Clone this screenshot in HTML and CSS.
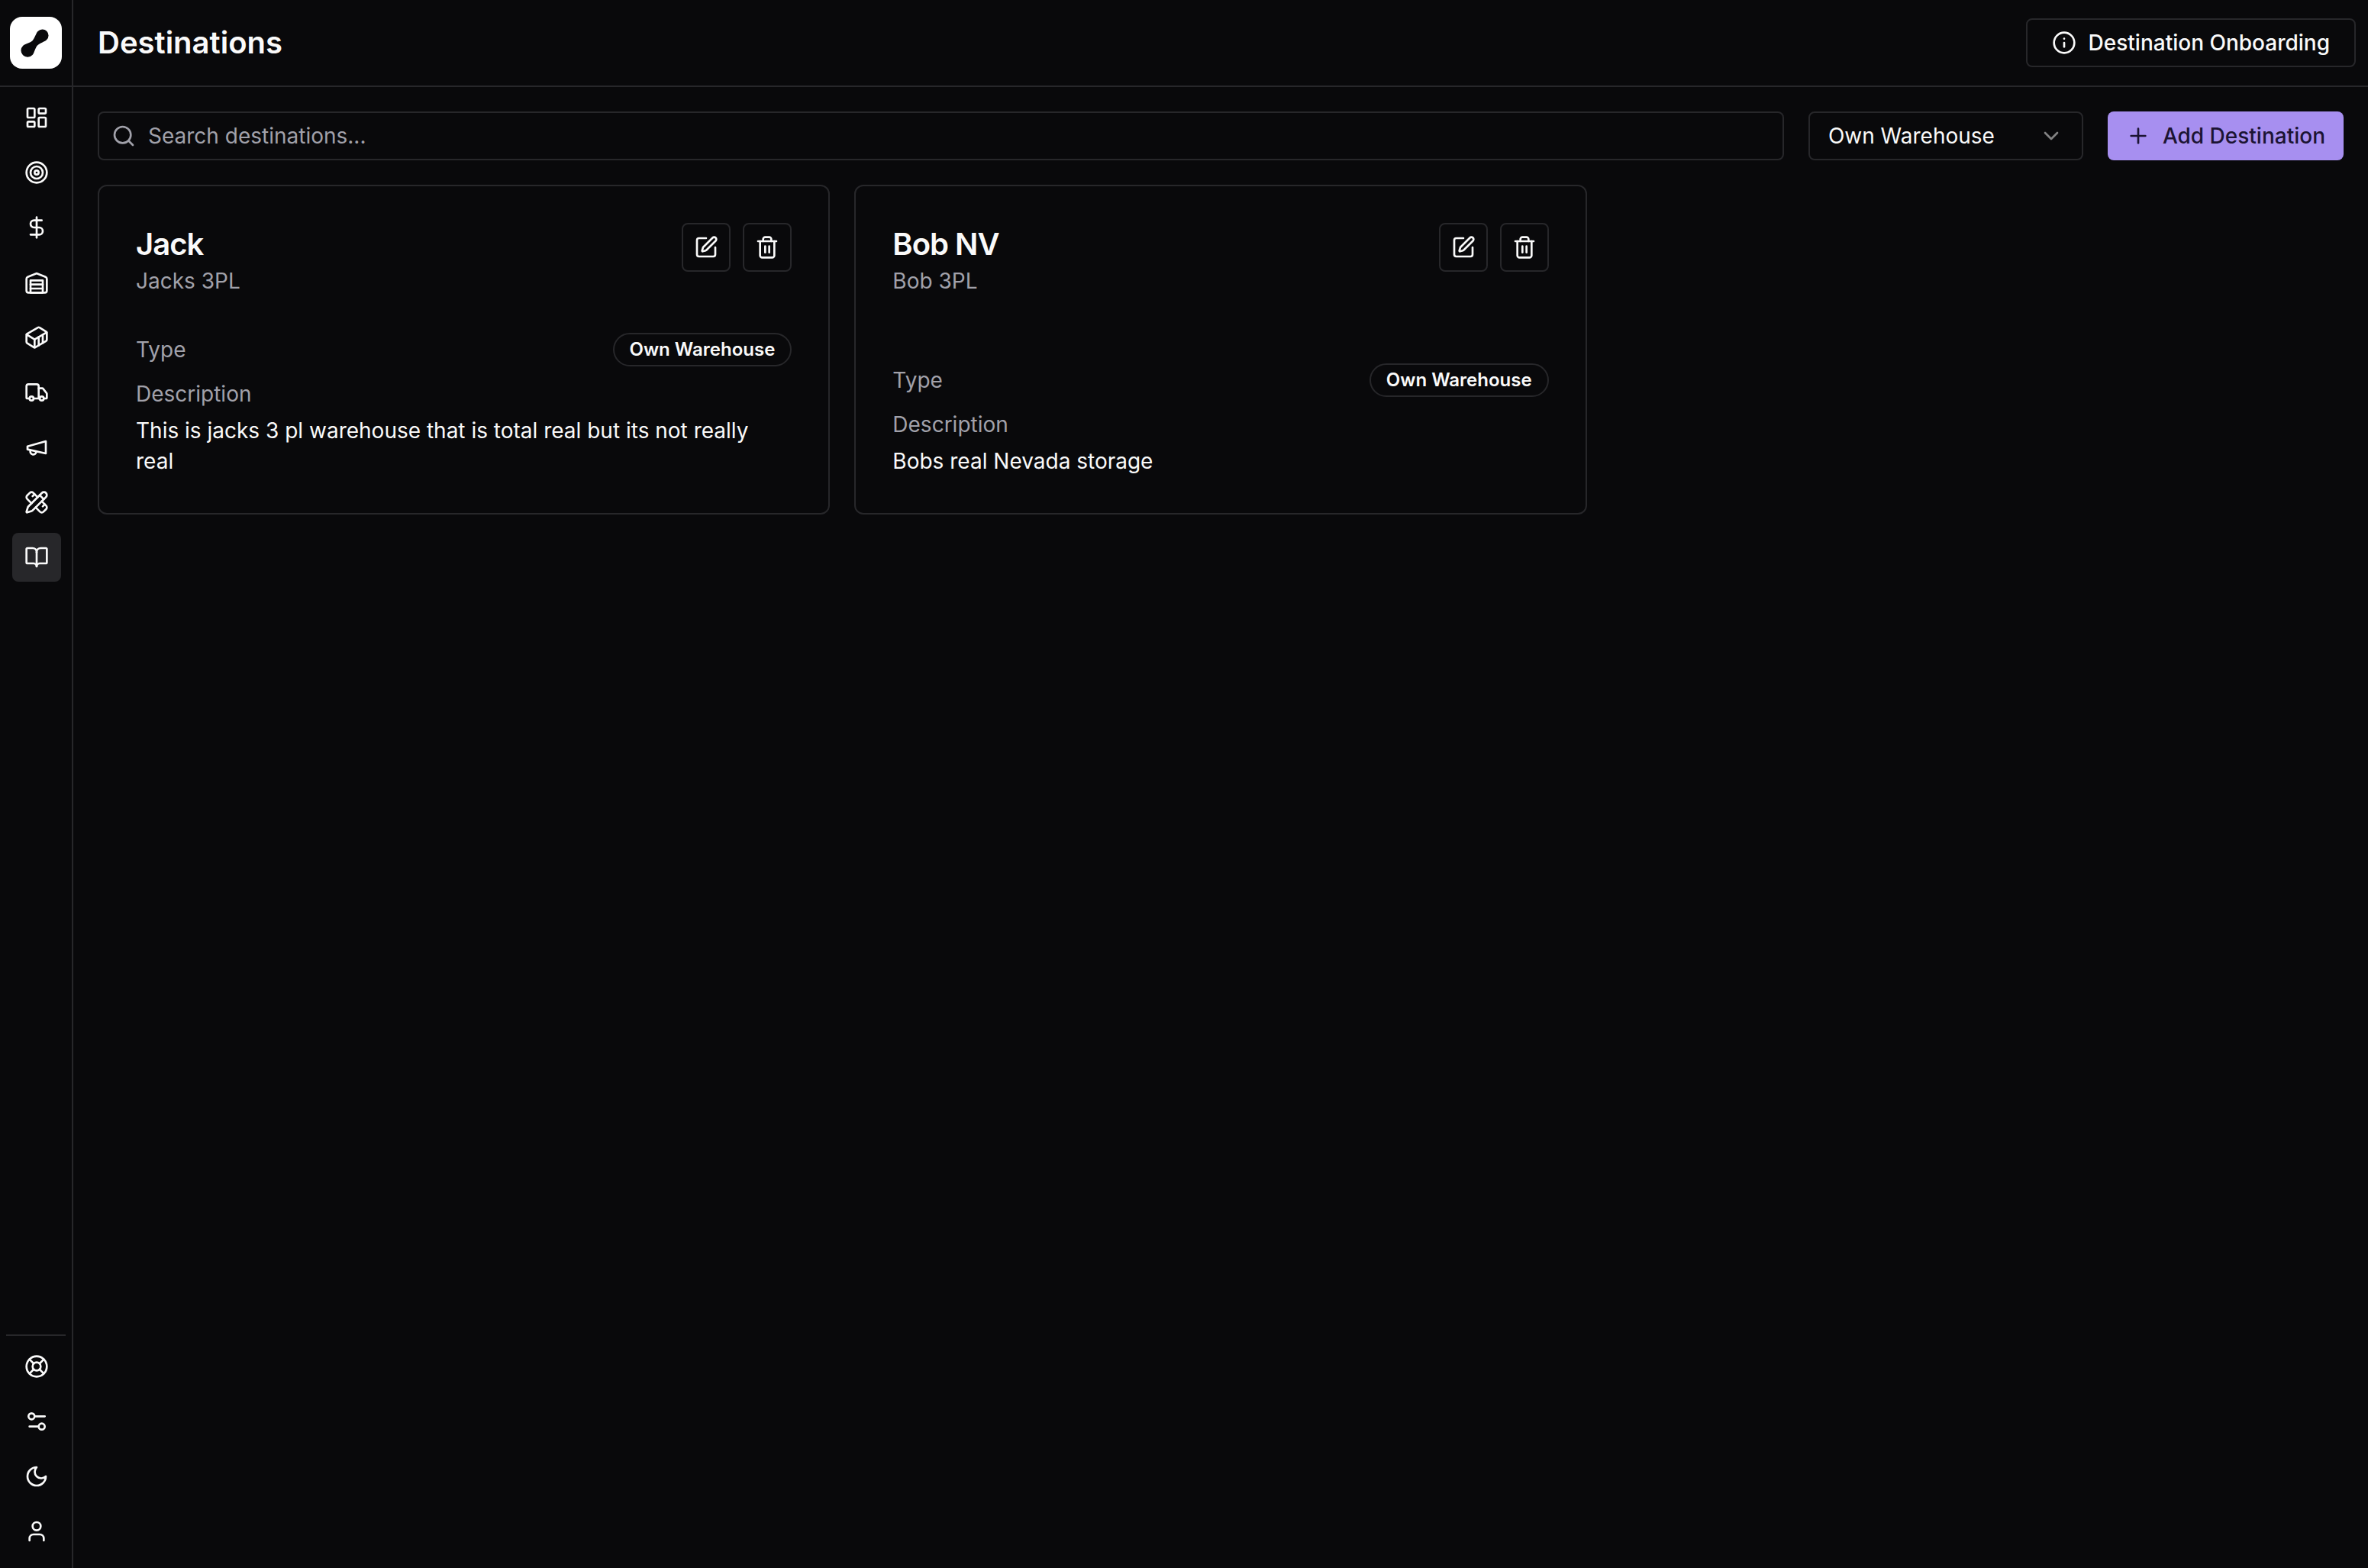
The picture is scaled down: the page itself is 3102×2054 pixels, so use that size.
FILE: index.html
```html
<!DOCTYPE html>
<html lang="en">
<head>
<meta charset="utf-8">
<title>Destinations</title>
<link rel="stylesheet" href="styles.css">
</head>
<body>
<svg class="sprite" width="0" height="0" aria-hidden="true">
  <defs>
    <symbol id="i-dashboard" viewBox="0 0 24 24"><rect x="3" y="3" width="7" height="9" rx="1"/><rect x="14" y="3" width="7" height="5" rx="1"/><rect x="14" y="12" width="7" height="9" rx="1"/><rect x="3" y="16" width="7" height="5" rx="1"/></symbol>
    <symbol id="i-target" viewBox="0 0 24 24"><circle cx="12" cy="12" r="10"/><circle cx="12" cy="12" r="6"/><circle cx="12" cy="12" r="2"/></symbol>
    <symbol id="i-dollar" viewBox="0 0 24 24"><line x1="12" x2="12" y1="2" y2="22"/><path d="M17 5H9.5a3.5 3.5 0 0 0 0 7h5a3.5 3.5 0 0 1 0 7H6"/></symbol>
    <symbol id="i-warehouse" viewBox="0 0 24 24"><path d="M22 8.35V20a2 2 0 0 1-2 2H4a2 2 0 0 1-2-2V8.35A2 2 0 0 1 3.26 6.5l8-3.2a2 2 0 0 1 1.48 0l8 3.2A2 2 0 0 1 22 8.35Z"/><path d="M6 18h12"/><path d="M6 14h12"/><rect x="6" y="10" width="12" height="12"/></symbol>
    <symbol id="i-container" viewBox="0 0 24 24"><path d="M22 7.7c0-.6-.4-1.2-.8-1.5l-6.3-3.9a1.72 1.72 0 0 0-1.7 0l-10.3 6c-.5.2-.9.8-.9 1.4v6.6c0 .5.4 1.2.8 1.5l6.3 3.9a1.72 1.72 0 0 0 1.7 0l10.3-6c.5-.3.9-1 .9-1.5Z"/><path d="M10 21.9V14L2.1 9.1"/><path d="m10 14 11.9-6.9"/><path d="M14 19.8v-8.1"/><path d="M18 17.5V9.4"/></symbol>
    <symbol id="i-truck" viewBox="0 0 24 24"><path d="M14 18V6a2 2 0 0 0-2-2H4a2 2 0 0 0-2 2v11a1 1 0 0 0 1 1h2"/><path d="M15 18H9"/><path d="M19 18h2a1 1 0 0 0 1-1v-3.65a1 1 0 0 0-.22-.624l-3.48-4.35A1 1 0 0 0 17.52 8H14"/><circle cx="17" cy="18" r="2"/><circle cx="7" cy="18" r="2"/></symbol>
    <symbol id="i-megaphone" viewBox="0 0 24 24"><path d="m3 11 18-5v12L3 14v-3z"/><path d="M11.6 16.8a3 3 0 1 1-5.8-1.6"/></symbol>
    <symbol id="i-ruler" viewBox="0 0 24 24"><path d="M13 7 8.7 2.7a2.41 2.41 0 0 0-3.4 0L2.7 5.3a2.41 2.41 0 0 0 0 3.4L7 13"/><path d="m8 6 2-2"/><path d="m18 16 2-2"/><path d="m17 11 4.3 4.3c.94.94.94 2.46 0 3.4l-2.6 2.6c-.94.94-2.46.94-3.4 0L11 17"/><path d="M21.174 6.812a1 1 0 0 0-3.986-3.987L3.842 16.174a2 2 0 0 0-.5.83l-1.321 4.352a.5.5 0 0 0 .623.622l4.353-1.32a2 2 0 0 0 .83-.497z"/><path d="m15 5 4 4"/></symbol>
    <symbol id="i-book" viewBox="0 0 24 24"><path d="M12 7v14"/><path d="M3 18a1 1 0 0 1-1-1V4a1 1 0 0 1 1-1h5a4 4 0 0 1 4 4 4 4 0 0 1 4-4h5a1 1 0 0 1 1 1v13a1 1 0 0 1-1 1h-6a3 3 0 0 0-3 3 3 3 0 0 0-3-3z"/></symbol>
    <symbol id="i-lifebuoy" viewBox="0 0 24 24"><circle cx="12" cy="12" r="10"/><path d="m4.93 4.93 4.24 4.24"/><path d="m14.83 9.17 4.24-4.24"/><path d="m14.83 14.83 4.24 4.24"/><path d="m9.17 14.83-4.24 4.24"/><circle cx="12" cy="12" r="4"/></symbol>
    <symbol id="i-settings" viewBox="0 0 24 24"><path d="M20 7h-9"/><path d="M14 17H5"/><circle cx="17" cy="17" r="3"/><circle cx="7" cy="7" r="3"/></symbol>
    <symbol id="i-moon" viewBox="0 0 24 24"><path d="M12 3a6 6 0 0 0 9 9 9 9 0 1 1-9-9Z"/></symbol>
    <symbol id="i-user" viewBox="0 0 24 24"><path d="M19 21v-2a4 4 0 0 0-4-4H9a4 4 0 0 0-4 4v2"/><circle cx="12" cy="7" r="4"/></symbol>
    <symbol id="i-pen" viewBox="0 0 24 24"><path d="M12 3H5a2 2 0 0 0-2 2v14a2 2 0 0 0 2 2h14a2 2 0 0 0 2-2v-7"/><path d="M18.375 2.625a1 1 0 0 1 3 3l-9.013 9.014a2 2 0 0 1-.853.505l-2.873.84a.5.5 0 0 1-.62-.62l.84-2.873a2 2 0 0 1 .506-.852z"/></symbol>
    <symbol id="i-trash" viewBox="0 0 24 24"><path d="M3 6h18"/><path d="M19 6v14c0 1-1 2-2 2H7c-1 0-2-1-2-2V6"/><path d="M8 6V4c0-1 1-2 2-2h4c1 0 2 1 2 2v2"/><line x1="10" x2="10" y1="11" y2="17"/><line x1="14" x2="14" y1="11" y2="17"/></symbol>
    <symbol id="i-info" viewBox="0 0 24 24"><circle cx="12" cy="12" r="10"/><path d="M12 16v-4"/><path d="M12 8h.01"/></symbol>
    <symbol id="i-search" viewBox="0 0 24 24"><circle cx="11" cy="11" r="8"/><path d="m21 21-4.3-4.3"/></symbol>
    <symbol id="i-chevron" viewBox="0 0 24 24"><path d="m6 9 6 6 6-6"/></symbol>
    <symbol id="i-plus" viewBox="0 0 24 24"><path d="M5 12h14"/><path d="M12 5v14"/></symbol>
  </defs>
</svg>

<div class="app">
  <aside class="sidebar">
    <div class="brand">
      <div class="logo">
        <svg class="logo-mark" viewBox="0 0 68 68"><path d="M36.600 19.100A8 8 0 1 1 48 30.300C45.500 32.800 39 34.500 36 37.500C33 40.500 32 47.600 29.500 50.100A8.700 8.700 0 1 1 17.100 37.900C19.600 35.400 26.600 34.200 29.600 31.200C32.600 28.200 34.100 21.600 36.600 19.100Z"/></svg>
      </div>
    </div>
    <nav class="nav">
      <a class="nav-item"><svg class="icon"><use href="#i-dashboard"/></svg></a>
      <a class="nav-item"><svg class="icon"><use href="#i-target"/></svg></a>
      <a class="nav-item"><svg class="icon"><use href="#i-dollar"/></svg></a>
      <a class="nav-item"><svg class="icon"><use href="#i-warehouse"/></svg></a>
      <a class="nav-item"><svg class="icon"><use href="#i-container"/></svg></a>
      <a class="nav-item"><svg class="icon"><use href="#i-truck"/></svg></a>
      <a class="nav-item"><svg class="icon"><use href="#i-megaphone"/></svg></a>
      <a class="nav-item"><svg class="icon"><use href="#i-ruler"/></svg></a>
      <a class="nav-item is-active"><svg class="icon"><use href="#i-book"/></svg></a>
    </nav>
    <div class="nav-footer">
      <a class="nav-item"><svg class="icon"><use href="#i-lifebuoy"/></svg></a>
      <a class="nav-item"><svg class="icon"><use href="#i-settings"/></svg></a>
      <a class="nav-item"><svg class="icon"><use href="#i-moon"/></svg></a>
      <a class="nav-item"><svg class="icon"><use href="#i-user"/></svg></a>
    </div>
  </aside>

  <div class="content">
    <header class="topbar">
      <h1 class="page-title">Destinations</h1>
      <button class="btn btn-outline btn-onboarding"><svg class="icon"><use href="#i-info"/></svg>Destination Onboarding</button>
    </header>
    <main class="main">
      <div class="toolbar">
        <label class="search">
          <svg class="icon icon-muted"><use href="#i-search"/></svg>
          <span class="search-placeholder">Search destinations...</span>
        </label>
        <div class="select">
          <span>Own Warehouse</span>
          <svg class="icon icon-faint"><use href="#i-chevron"/></svg>
        </div>
        <button class="btn btn-primary"><svg class="icon"><use href="#i-plus"/></svg>Add Destination</button>
      </div>

      <div class="cards">
        <article class="card">
          <div class="card-head">
            <div>
              <h2 class="card-name">Jack</h2>
              <p class="card-sub">Jacks 3PL</p>
            </div>
            <div class="card-actions">
              <button class="icon-btn"><svg class="icon"><use href="#i-pen"/></svg></button>
              <button class="icon-btn"><svg class="icon"><use href="#i-trash"/></svg></button>
            </div>
          </div>
          <div class="card-body">
            <div class="type-row">
              <span class="label">Type</span>
              <span class="badge">Own Warehouse</span>
            </div>
            <div class="label">Description</div>
            <p class="desc">This is jacks 3 pl warehouse that is total real but its not really real</p>
          </div>
        </article>

        <article class="card">
          <div class="card-head">
            <div>
              <h2 class="card-name">Bob NV</h2>
              <p class="card-sub">Bob 3PL</p>
            </div>
            <div class="card-actions">
              <button class="icon-btn"><svg class="icon"><use href="#i-pen"/></svg></button>
              <button class="icon-btn"><svg class="icon"><use href="#i-trash"/></svg></button>
            </div>
          </div>
          <div class="card-body">
            <div class="type-row">
              <span class="label">Type</span>
              <span class="badge">Own Warehouse</span>
            </div>
            <div class="label">Description</div>
            <p class="desc">Bobs real Nevada storage</p>
          </div>
        </article>
      </div>
    </main>
  </div>
</div>
</body>
</html>
```

FILE: styles.css
```css
* { box-sizing: border-box; }

html, body {
  margin: 0;
  height: 100%;
  background: #09090b;
}

body {
  color: #fafafa;
  font-family: Inter, "Liberation Sans", sans-serif;
  font-size: 28px;
  line-height: 40px;
  overflow: hidden;
}

.sprite { position: absolute; }

.app {
  display: flex;
  height: 2054px;
}

.icon {
  display: block;
  flex: none;
  width: 32px;
  height: 32px;
  fill: none;
  stroke: currentColor;
  stroke-width: 2;
  stroke-linecap: round;
  stroke-linejoin: round;
}

.icon-muted { color: #a1a1aa; }
.icon-faint { color: #fafafa; opacity: .5; }

/* Sidebar */
.sidebar {
  display: flex;
  flex-direction: column;
  flex: none;
  width: 96px;
  height: 100%;
  border-right: 2px solid #27272a;
}

.brand {
  display: flex;
  flex: none;
  height: 114px;
  padding: 22px 0 0 13px;
  border-bottom: 2px solid #27272a;
}

.logo {
  width: 68px;
  height: 68px;
  border-radius: 16px;
  background: #fff;
}

.logo-mark {
  display: block;
  width: 68px;
  height: 68px;
  fill: #09090b;
}

.nav {
  display: flex;
  flex-direction: column;
  align-items: center;
  gap: 8px;
  flex: 1;
  padding: 8px 0 0 2px;
}

.nav-item {
  display: flex;
  align-items: center;
  justify-content: center;
  width: 64px;
  height: 64px;
  border-radius: 8px;
  color: #fafafa;
}

.nav-item.is-active { background: #27272a; }

.nav-footer {
  display: flex;
  flex-direction: column;
  align-items: center;
  gap: 8px;
  margin: 0 8px;
  padding: 8px 0 16px 2px;
  border-top: 2px solid #27272a;
}

/* Top bar */
.content {
  display: flex;
  flex-direction: column;
  flex: 1;
  min-width: 0;
}

.topbar {
  display: flex;
  align-items: center;
  justify-content: space-between;
  flex: none;
  height: 114px;
  padding: 0 16px 0 32px;
  border-bottom: 2px solid #27272a;
}

.page-title {
  margin: 0;
  font-size: 40px;
  line-height: 56px;
  font-weight: 600;
}

.btn {
  display: flex;
  align-items: center;
  gap: 16px;
  height: 64px;
  border-radius: 8px;
  font: inherit;
  font-weight: 500;
  white-space: nowrap;
}

.btn-outline {
  padding: 0 32px;
  border: 2px solid #27272a;
  background: transparent;
  color: #fafafa;
}

.btn-primary {
  padding: 0 24px;
  border: 0;
  background: #a78ff0;
  color: #1c1433;
}

/* Toolbar */
.main {
  flex: 1;
  padding: 32px;
}

.toolbar {
  display: flex;
  gap: 32px;
}

.search {
  display: flex;
  align-items: center;
  gap: 16px;
  flex: 1;
  height: 64px;
  padding: 0 16px;
  border: 2px solid #27272a;
  border-radius: 8px;
}

.search-placeholder { color: #a1a1aa; }

.select {
  display: flex;
  align-items: center;
  justify-content: space-between;
  flex: none;
  width: 360px;
  height: 64px;
  padding: 0 24px;
  border: 2px solid #27272a;
  border-radius: 8px;
}

/* Cards */
.cards {
  display: grid;
  grid-template-columns: repeat(3, 1fr);
  gap: 32px;
  margin-top: 32px;
}

.card {
  display: flex;
  flex-direction: column;
  justify-content: space-between;
  gap: 48px;
  padding: 48px;
  border: 2px solid #27272a;
  border-radius: 12px;
}

.card-head {
  display: flex;
  align-items: flex-start;
  justify-content: space-between;
}

.card-name {
  margin: 0;
  font-size: 40px;
  line-height: 56px;
  font-weight: 600;
  letter-spacing: -1px;
}

.card-sub {
  margin: 0;
  color: #a1a1aa;
}

.card-actions {
  display: flex;
  gap: 16px;
}

.icon-btn {
  display: flex;
  align-items: center;
  justify-content: center;
  width: 64px;
  height: 64px;
  padding: 0;
  border: 2px solid #27272a;
  border-radius: 8px;
  background: transparent;
  color: #fafafa;
}

.type-row {
  display: flex;
  align-items: center;
  justify-content: space-between;
  margin-bottom: 16px;
}

.label { color: #a1a1aa; }

.badge {
  padding: 0 20px;
  border: 2px solid #27272a;
  border-radius: 999px;
  font-size: 24px;
  line-height: 40px;
  font-weight: 600;
}

.desc {
  margin: 8px 0 0;
}
```
